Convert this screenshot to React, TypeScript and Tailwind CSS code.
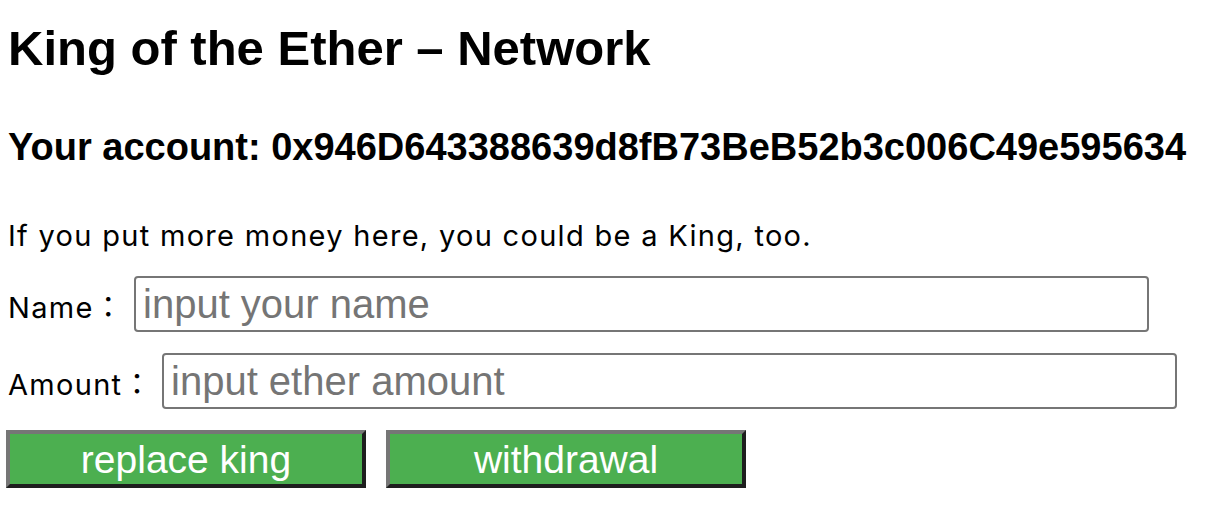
import React from "react";

function Colon() {
  return <span className="font-['Noto_Sans_CJK_JP',sans-serif] tracking-normal">：</span>;
}

export default function App() {
  return (
    <div className="w-[1220px] h-[508px] bg-white text-black overflow-hidden pl-[8px]">
      <h1 className="pt-[24px] text-[49px] leading-[49px] font-bold font-['Liberation_Sans',sans-serif] whitespace-nowrap">
        King of the Ether – Network
      </h1>
      <h3 className="mt-[55px] text-[38px] leading-[38px] font-bold font-['Liberation_Sans',sans-serif] whitespace-nowrap">
        Your account: 0x946D643388639d8fB73BeB52b3c006C49e595634
      </h3>
      <p className="mt-[55px] text-[29px] leading-[29px] tracking-[1.3px] whitespace-nowrap font-['Inter','Noto_Sans_CJK_SC',sans-serif]">
        If you put more money here, you could be a King, too.
      </p>
      <div className="mt-[26px] flex flex-col gap-[21px]">
        <div className="flex items-start h-[56px]">
          <span className="pt-[12px] text-[29px] leading-[35px] tracking-[1.3px] w-[126px] whitespace-nowrap font-['Inter','Noto_Sans_CJK_SC',sans-serif]">
            Name<Colon />
          </span>
          <input
            placeholder="input your name"
            className="w-[1015px] h-[56px] border-2 border-[#767676] rounded-[4px] px-[7px] text-[40px] placeholder:text-[#757575] outline-none font-['Liberation_Sans',sans-serif]"
          />
        </div>
        <div className="flex items-start h-[56px]">
          <span className="pt-[12px] text-[29px] leading-[35px] tracking-[1.3px] w-[154px] whitespace-nowrap font-['Inter','Noto_Sans_CJK_SC',sans-serif]">
            Amount<Colon />
          </span>
          <input
            placeholder="input ether amount"
            className="w-[1015px] h-[56px] border-2 border-[#767676] rounded-[4px] px-[7px] text-[40px] placeholder:text-[#757575] outline-none font-['Liberation_Sans',sans-serif]"
          />
        </div>
      </div>
      <div className="mt-[21px] flex gap-[20px] -ml-[2px]">
        <button className="w-[360px] h-[58px] bg-[#4CAF50] text-white text-[39px] leading-none border-[4px] border-t-[#767676] border-l-[#767676] border-b-[#1e1e1e] border-r-[#1e1e1e] font-['Liberation_Sans',sans-serif]">
          replace king
        </button>
        <button className="w-[360px] h-[58px] bg-[#4CAF50] text-white text-[39px] leading-none border-[4px] border-t-[#767676] border-l-[#767676] border-b-[#1e1e1e] border-r-[#1e1e1e] font-['Liberation_Sans',sans-serif]">
          withdrawal
        </button>
      </div>
    </div>
  );
}
